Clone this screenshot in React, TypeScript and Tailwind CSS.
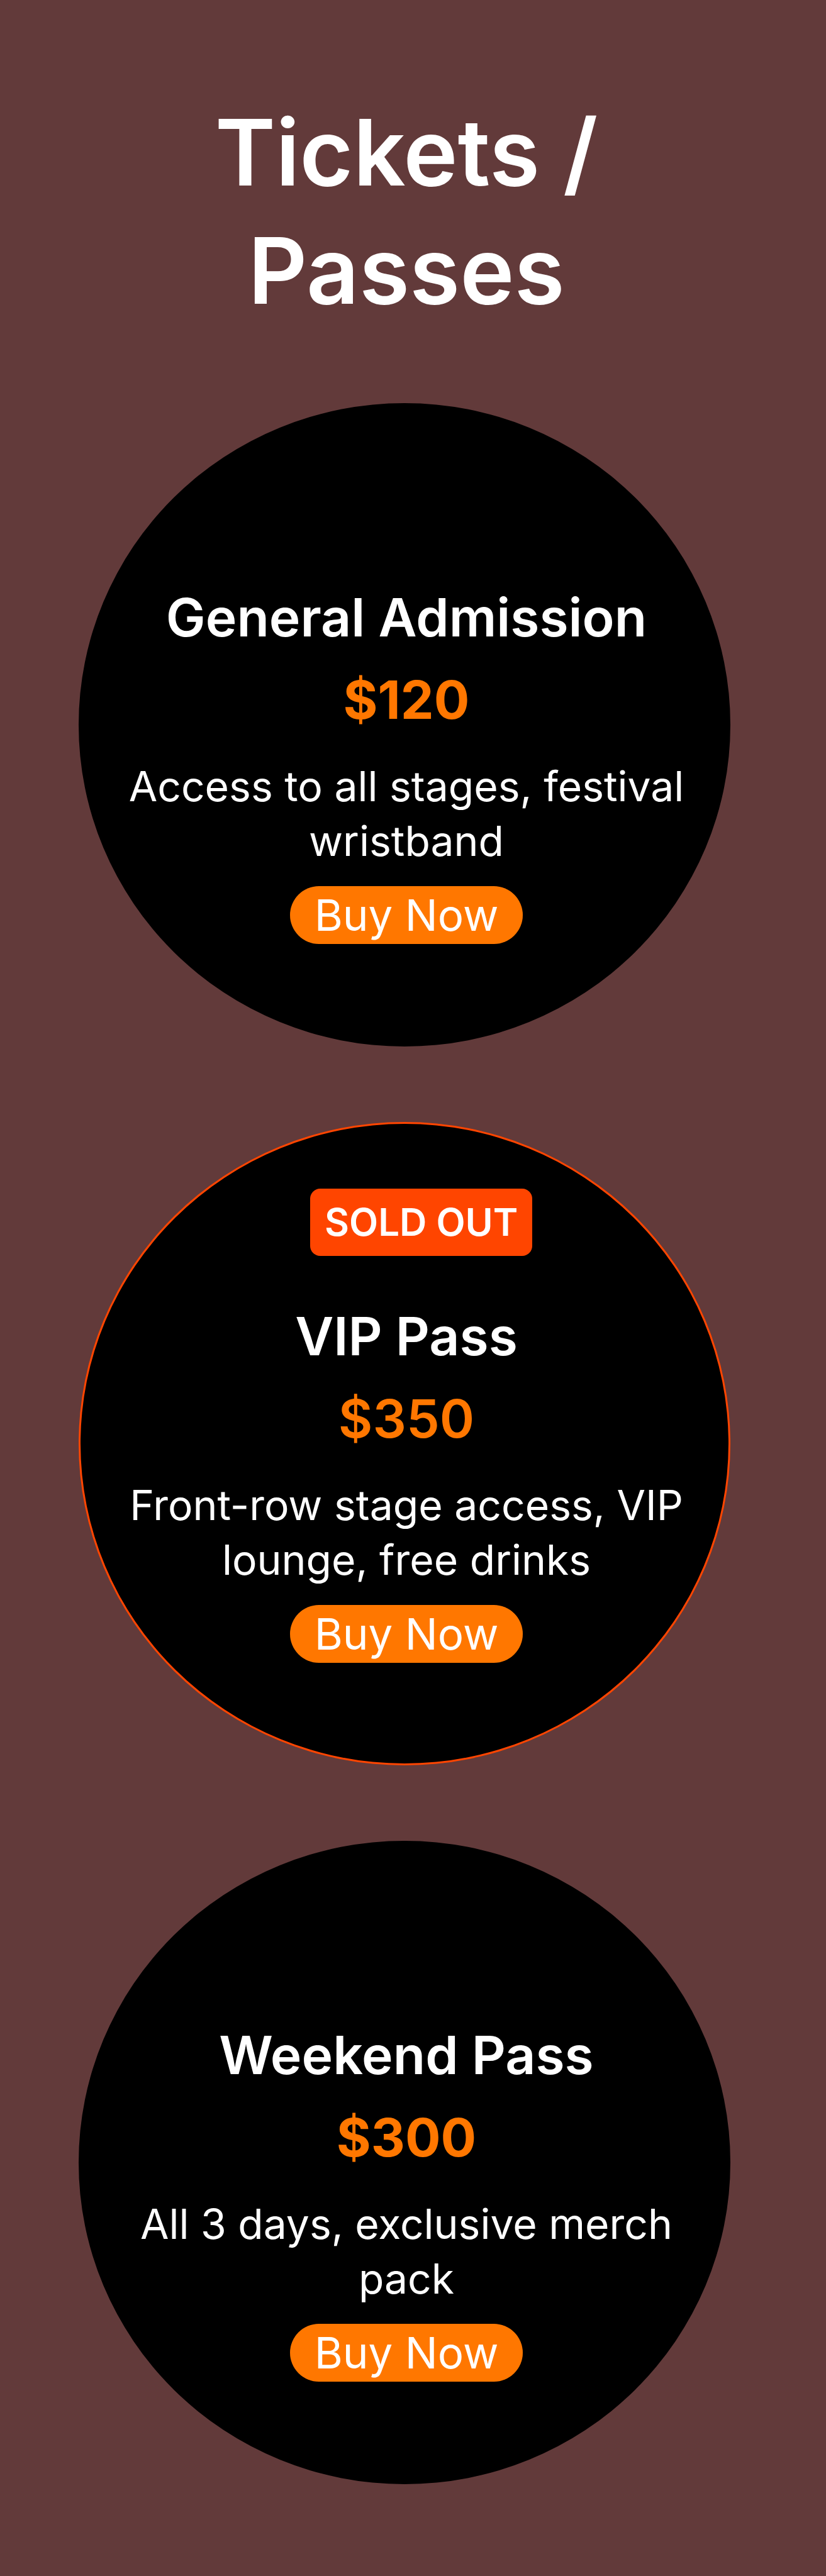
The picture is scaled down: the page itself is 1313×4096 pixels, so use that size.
type Ticket = {
  name: string;
  price: string;
  priceClass: string;
  description: string;
  soldOut: boolean;
};

const tickets: Ticket[] = [
  {
    name: "General Admission",
    price: "$120",
    priceClass: "font-bold",
    description: "Access to all stages, festival wristband",
    soldOut: false,
  },
  {
    name: "VIP Pass",
    price: "$350",
    priceClass: "font-semibold",
    description: "Front-row stage access, VIP lounge, free drinks",
    soldOut: true,
  },
  {
    name: "Weekend Pass",
    price: "$300",
    priceClass: "font-bold",
    description: "All 3 days, exclusive merch pack",
    soldOut: false,
  },
];

function TicketCard({ ticket }: { ticket: Ticket }) {
  return (
    <article
      className={`relative flex w-full flex-col items-center rounded-[50%] border-[3px] bg-black pt-[287px] pr-[66px] pb-[160px] pl-[72px] text-center ${
        ticket.soldOut ? "border-[#ff4500]" : "border-black"
      }`}
    >
      {ticket.soldOut && (
        <span className="absolute top-[103px] left-[365px] rounded-2xl bg-[#ff4500] px-[23px] py-[17px] text-[60px] leading-[73px] font-semibold whitespace-nowrap">
          SOLD OUT
        </span>
      )}
      <h2 className="text-[84px] leading-[102px] font-semibold">{ticket.name}</h2>
      <p className={`mt-[29px] text-[84px] leading-[102px] text-[#ff7700] ${ticket.priceClass}`}>
        {ticket.price}
      </p>
      <p className="mt-[43px] text-[66px] leading-[87px]">{ticket.description}</p>
      <button
        type="button"
        className="mt-7 rounded-full bg-[#ff7700] px-[39px] text-[69px] leading-[92px] whitespace-nowrap"
      >
        Buy Now
      </button>
    </article>
  );
}

export default function App() {
  return (
    <main className="bg-[#623a3a] pt-[148px] pr-[146px] pb-[146px] pl-[125px] font-[Inter,sans-serif] text-white [font-variation-settings:'opsz'_15]">
      <h1 className="text-center text-[146px] leading-[188px] font-semibold">
        Tickets /<br />
        Passes
      </h1>
      <div className="mt-[117px] mr-[6px] flex flex-col gap-[120px]">
        {tickets.map((ticket) => (
          <TicketCard key={ticket.name} ticket={ticket} />
        ))}
      </div>
    </main>
  );
}
